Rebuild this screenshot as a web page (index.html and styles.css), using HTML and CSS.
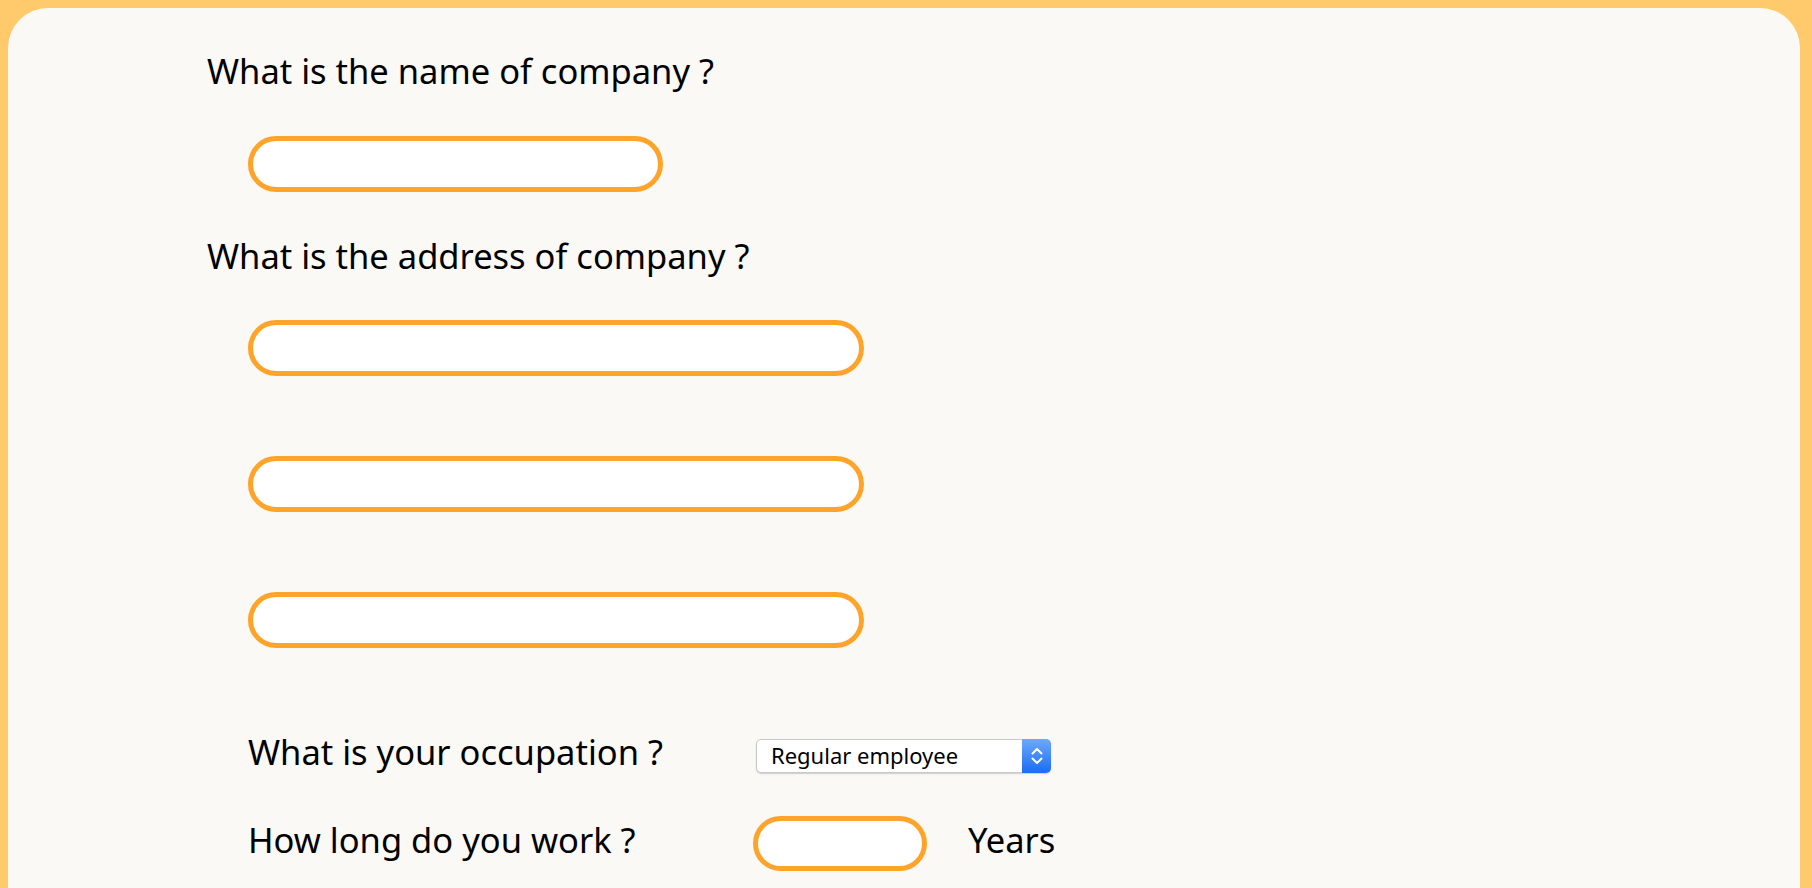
FILE: index.html
```html
<!DOCTYPE html>
<html lang="en">
<head>
<meta charset="utf-8">
<title>Company form</title>
<link rel="stylesheet" href="styles.css">
</head>
<body>
<main class="card">
  <p class="label">What is the name of company ?</p>
  <div class="field field-name"><input class="pill pill-md" type="text"></div>

  <p class="label label-address">What is the address of company ?</p>
  <div class="field field-addr"><input class="pill pill-lg" type="text"></div>
  <div class="field field-addr2"><input class="pill pill-lg" type="text"></div>
  <div class="field field-addr2"><input class="pill pill-lg" type="text"></div>

  <div class="row row-occupation">
    <span class="row-label">What is your occupation ?</span>
    <div class="select">
      <span class="select-text">Regular employee</span>
      <span class="select-btn">
        <svg width="14" height="18" viewBox="0 0 14 18" fill="none" stroke="#fff" stroke-width="2" stroke-linecap="round" stroke-linejoin="round">
          <path d="M2.5 6.5 L7 2 L11.5 6.5"/>
          <path d="M2.5 11.5 L7 16 L11.5 11.5"/>
        </svg>
      </span>
    </div>
  </div>

  <div class="row row-years">
    <span class="row-label">How long do you work ?</span>
    <input class="pill pill-sm" type="text">
    <span class="unit">Years</span>
  </div>
</main>
</body>
</html>
```

FILE: styles.css
```css
html, body {
  margin: 0;
  padding: 0;
}

body {
  background: #ffca6c;
  font-family: "Noto Sans", "Liberation Sans", sans-serif;
  color: #000;
  overflow: hidden;
}

.card {
  margin: 8px 12px 0 8px;
  min-height: 1000px;
  background: #faf9f5;
  border-radius: 40px 40px 0 0;
  padding: 42px 0 0 199px;
  box-sizing: border-box;
}

.label {
  margin: 0;
  font-size: 34.5px;
  line-height: 42px;
}

.label-address {
  margin-top: 43px;
}

.field {
  margin-left: 41px;
}

.field-name {
  margin-top: 44px;
}

.field-addr {
  margin-top: 43px;
}

.field-addr2 {
  margin-top: 80px;
}

.pill {
  display: block;
  box-sizing: border-box;
  height: 56px;
  border: 5px solid #ffa42a;
  border-radius: 9999px;
  background: #fff;
  outline: none;
  padding: 0 20px;
  font: inherit;
}

.pill-md { width: 415px; }
.pill-lg { width: 616px; }
.pill-sm {
  width: 174px;
  height: 55px;
}

.row {
  display: flex;
  align-items: flex-start;
  margin-left: 41px;
}

.row-label {
  width: 505px;
  flex: none;
  font-size: 34.5px;
  line-height: 42px;
}

.row-occupation {
  margin-top: 81px;
}

.row-occupation .row-label {
  margin-top: 2px;
}

.row-occupation .select {
  margin: 10px 0 0 3px;
}

.row-years {
  margin-top: 43px;
}

.row-years .row-label {
  margin-top: 3px;
}

.unit {
  margin: 3px 0 0 41px;
  font-size: 34.5px;
  line-height: 42px;
}

.select {
  display: flex;
  width: 295px;
  height: 34px;
  box-sizing: border-box;
  border: 1px solid #c9c9c9;
  border-radius: 5px;
  background: #fff;
  box-shadow: 0 1px 1.5px rgba(0, 0, 0, 0.18);
}

.select-text {
  flex: 1;
  padding-left: 14px;
  font-size: 22px;
  line-height: 31px;
}

.select-btn {
  width: 29px;
  margin: -1px -1px -1px 0;
  border-radius: 0 5px 5px 0;
  background: linear-gradient(#6ea9fa, #1a6cf6);
  display: flex;
  align-items: center;
  justify-content: center;
}
```
